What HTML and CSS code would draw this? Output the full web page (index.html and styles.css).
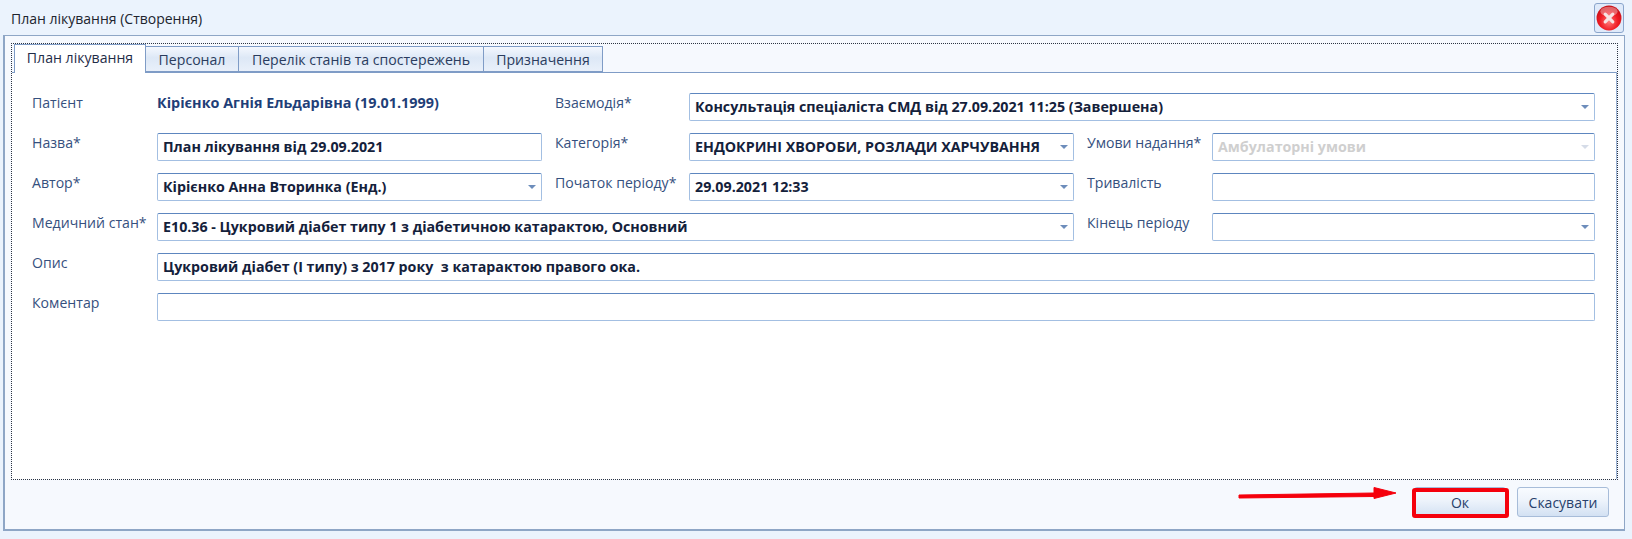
FILE: index.html
```html
<!DOCTYPE html>
<html lang="uk">
<head>
<meta charset="utf-8">
<title>План лікування (Створення)</title>
<link rel="stylesheet" href="styles.css">
</head>
<body>
<div class="window">
  <header class="titlebar">
    <span class="title">План лікування (Створення)</span>
    <button class="close" aria-label="Закрити">
      <svg width="26" height="26" viewBox="0 0 24 24">
        <defs>
          <radialGradient id="red" cx="50%" cy="65%" r="60%">
            <stop offset="0" stop-color="#ff7a7a"/>
            <stop offset="0.6" stop-color="#f01c24"/>
            <stop offset="1" stop-color="#c90f16"/>
          </radialGradient>
        </defs>
        <circle cx="12" cy="12" r="11.5" fill="url(#red)"/>
        <ellipse cx="12" cy="6" rx="8" ry="4.5" fill="#ffffff" opacity="0.35"/>
        <path d="M8.5 8.5 L15.5 15.5 M15.5 8.5 L8.5 15.5" stroke="#f7e3e3" stroke-width="3" stroke-linecap="round"/>
      </svg>
    </button>
  </header>
  <main class="panel">
    <section class="dotted">
      <nav class="tabs">
        <span class="tab active">План лікування</span>
        <span class="tab t2">Персонал</span>
        <span class="tab t3">Перелік станів та спостережень</span>
        <span class="tab t4">Призначення</span>
      </nav>
      <div class="content">
        <form class="form">
          <label class="lbl">Патієнт</label>
          <div class="patient">Кірієнко Агнія Ельдарівна (19.01.1999)</div>
          <label class="lbl inset">Взаємодія*</label>
          <div class="field combo span3"><span class="val">Консультація спеціаліста СМД від 27.09.2021 11:25 (Завершена)</span><i class="arrow"></i></div>

          <label class="lbl">Назва*</label>
          <div class="field"><span class="val">План лікування від 29.09.2021</span></div>
          <label class="lbl inset">Категорія*</label>
          <div class="field combo"><span class="val">ЕНДОКРИНІ ХВОРОБИ, РОЗЛАДИ ХАРЧУВАННЯ</span><i class="arrow"></i></div>
          <label class="lbl inset">Умови надання*</label>
          <div class="field combo disabled"><span class="val">Амбулаторні умови</span><i class="arrow"></i></div>

          <label class="lbl">Автор*</label>
          <div class="field combo"><span class="val">Кірієнко Анна Вторинка (Енд.)</span><i class="arrow"></i></div>
          <label class="lbl inset">Початок періоду*</label>
          <div class="field combo"><span class="val">29.09.2021 12:33</span><i class="arrow"></i></div>
          <label class="lbl inset">Тривалість</label>
          <div class="field"></div>

          <label class="lbl">Медичний стан*</label>
          <div class="field combo span3"><span class="val">E10.36 - Цукровий діабет типу 1 з діабетичною катарактою, Основний</span><i class="arrow"></i></div>
          <label class="lbl inset">Кінець періоду</label>
          <div class="field combo"><i class="arrow"></i></div>

          <label class="lbl">Опис</label>
          <div class="field span5"><span class="val">Цукровий діабет (І типу) з 2017 року  з катарактою правого ока.</span></div>

          <label class="lbl">Коментар</label>
          <div class="field span5"></div>
        </form>
      </div>
    </section>
    <footer class="footer">
      <svg class="pointer" width="160" height="16" viewBox="0 0 160 16">
        <path d="M1 10 L136 8 L136 2.5 L158 8 L136 13.5 L136 11.5 L1 13 Z" fill="#f5000c" stroke="#f5000c" stroke-linejoin="round"/>
      </svg>
      <button class="btn ok">Ок</button>
      <button class="btn">Скасувати</button>
    </footer>
  </main>
</div>
</body>
</html>
```
FILE: styles.css
```css
* { box-sizing: border-box; }
html, body { margin: 0; height: 539px; overflow: hidden; }
body {
  background: #ebf3fd;
  font-family: "Open Sans", "Noto Sans", sans-serif;
  font-size: 14px;
}
.window {
  height: 539px;
  display: flex;
  flex-direction: column;
  padding: 0 7px 8px 3px;
}
.titlebar {
  height: 35px;
  flex: none;
  display: flex;
  align-items: center;
  justify-content: space-between;
  padding-left: 8px;
}
.title { color: #20242e; font-size: 14px; position: relative; top: 1px; }
.close {
  width: 30px;
  height: 30px;
  padding: 0;
  margin-right: 1px;
  border: 1px solid #8aa5cc;
  border-radius: 3px;
  background: #dfeafa;
  display: flex;
  align-items: center;
  justify-content: center;
}
.panel {
  flex: 1;
  min-height: 0;
  display: flex;
  flex-direction: column;
  background: #f6f9fe;
  border: 1px solid #8ea6c6;
  border-bottom-width: 2px;
  border-left-width: 2px;
  padding: 7px 6px 0 6px;
}
.dotted {
  height: 437px;
  display: flex;
  flex-direction: column;
  border: 1px dotted #2c3442;
}
.tabs {
  height: 28px;
  flex: none;
  display: flex;
  align-items: flex-end;
  padding-left: 2px;
}
.tab {
  height: 26px;
  display: flex;
  align-items: center;
  justify-content: center;
  color: #2a3c5e;
  font-size: 14.1px;
  border: 1px solid #7f9cc6;
  border-left: 0;
  background: linear-gradient(#f4f8fe 0, #dde8f6 45%, #e9f0fa 100%);
}
.tab.active {
  height: 29px;
  width: 132px;
  background: #fff;
  color: #1f2c48;
  border-bottom: 0;
  border-left: 1px solid #7f9cc6;
  align-items: flex-start;
  padding-top: 3px;
  position: relative;
  top: 1px;
}
.t2 { width: 93px; }
.t3 { width: 245px; }
.t4 { width: 119px; }
.content {
  flex: 1;
  background: #fff;
  border-top: 1px solid #7f9cc6;
  border-right: 1px solid #9db4d6;
  padding: 20px 21px 0 20px;
}
.form {
  display: grid;
  grid-template-columns: 125px 384.5px 147.5px 384.5px 138.5px 383px;
  grid-auto-rows: 27px;
  row-gap: 13px;
}
.form > * { min-width: 0; }
.lbl {
  color: #35507e;
  font-size: 14.1px;
  line-height: 20px;
  height: 20px;
  white-space: nowrap;
}
.inset { padding-left: 13.5px; }
.patient {
  color: #1f3f78;
  font-weight: 700;
  font-size: 14.4px;
  line-height: 20px;
  white-space: nowrap;
}
.field {
  position: relative;
  height: 27.5px;
  display: flex;
  align-items: center;
  padding: 0 20px 0 5px;
  background: #fff;
  border: 1px solid #a3bfe2;
  border-top-color: #5d86bf;
  border-radius: 2px;
  color: #14213b;
  font-weight: 700;
  font-size: 14.25px;
  white-space: pre;
}
.span3 { grid-column: span 3; }
.span5 { grid-column: span 5; }
.arrow {
  position: absolute;
  right: 5px;
  top: 11px;
  width: 0;
  height: 0;
  border-left: 4px solid transparent;
  border-right: 4px solid transparent;
  border-top: 4px solid #6d8dbb;
}
.disabled { color: #cfcfcf; }
.disabled .arrow { border-top-color: #d5dce8; }
.footer {
  flex: 1;
  display: flex;
  justify-content: flex-end;
  align-items: flex-start;
  gap: 11px;
  padding: 7px 9px 0 0;
  position: relative;
}
.btn {
  width: 92px;
  height: 30px;
  padding: 0;
  font-family: inherit;
  font-size: 14px;
  color: #27406b;
  border: 1px solid #a7bcd9;
  border-radius: 3px;
  background: linear-gradient(#f8fbff 0, #edf3fb 45%, #d3e1f3 100%);
  position: relative;
}
.ok::after {
  content: "";
  position: absolute;
  inset: 0 -4px -2px -3px;
  border: 4px solid #f5000c;
  border-radius: 3px;
}
.pointer { position: absolute; left: 1227px; top: 5px; }
```
